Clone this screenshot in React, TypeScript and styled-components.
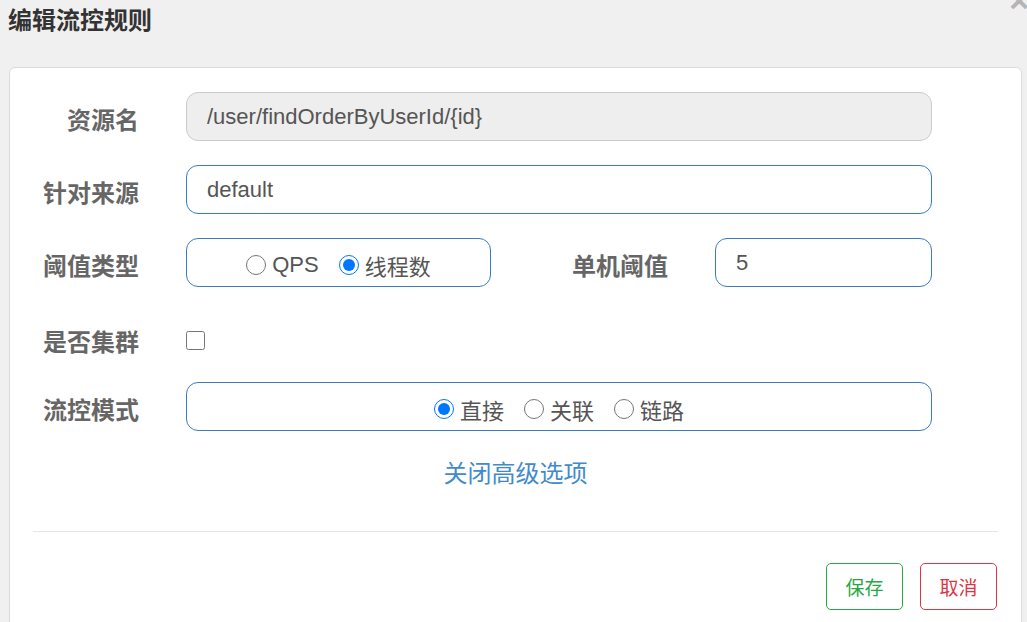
import React from 'react';
import styled, { createGlobalStyle } from 'styled-components';

const GlobalStyle = createGlobalStyle`
  html, body {
    margin: 0;
    padding: 0;
    background: #f0f0f0;
    overflow: hidden;
  }
  body {
    font-family: "Liberation Sans", "Noto Sans CJK SC", sans-serif;
  }
`;

const CJK = `"Noto Sans CJK SC", "Liberation Sans", sans-serif`;
const LATIN = `"Liberation Sans", "Noto Sans CJK SC", sans-serif`;

// modal frame
const Page = styled.div`
  position: relative;
  width: 1027px;
  height: 622px;
  overflow: hidden;
`;

const Header = styled.div`
  height: 67px;
  box-sizing: border-box;
  padding: 1px 0 0 8px;
`;

const Title = styled.h4`
  margin: 0;
  font-family: ${CJK};
  font-size: 24px;
  font-weight: 700;
  color: #333;
  line-height: 36px;
`;

const Close = styled.span`
  position: absolute;
  top: -17px;
  right: -2px;
  font-family: ${LATIN};
  font-size: 34px;
  font-weight: 700;
  color: #b5b5b5;
  line-height: 34px;
`;

const Card = styled.div`
  margin-left: 9px;
  width: 1013px;
  box-sizing: border-box;
  background: #fff;
  border: 1px solid #dcdcdc;
  border-radius: 6px;
  padding: 24px 0 60px;
`;

const Form = styled.div`
  display: flex;
  flex-direction: column;
  gap: 24px;
  padding-right: 89px;
`;

const Row = styled.div<{ $plain?: boolean }>`
  display: flex;
  align-items: center;
  height: ${p => (p.$plain ? '47px' : '49px')};
  box-sizing: border-box;
  padding-top: ${p => (p.$plain ? '11px' : '0')};
`;

const Label = styled.label<{ $grow?: boolean; $plain?: boolean }>`
  flex: ${p => (p.$grow ? '1' : '0 0 129px')};
  text-align: right;
  margin-right: 47px;
  padding-top: ${p => (p.$plain ? '0' : '4px')};
  font-family: ${CJK};
  font-size: 24px;
  font-weight: 700;
  color: #666;
`;

const TextInput = styled.input<{ $width?: number }>`
  box-sizing: border-box;
  height: 49px;
  ${p => (p.$width ? `width: ${p.$width}px;` : 'flex: 1;')}
  padding: 0 20px;
  border: 1px solid #3a7cbf;
  border-radius: 12px;
  background: #fff;
  font-family: ${LATIN};
  font-size: 22px;
  color: #555;
  outline: none;

  &:disabled {
    background: #eee;
    border-color: #ccc;
    color: #555;
  }
`;

const RadioBox = styled.div<{ $width?: number }>`
  box-sizing: border-box;
  height: 49px;
  ${p => (p.$width ? `width: ${p.$width}px;` : 'flex: 1;')}
  display: flex;
  align-items: center;
  justify-content: center;
  gap: 20px;
  border: 1px solid #3a7cbf;
  border-radius: 12px;
  padding-top: 5px;
`;

const Option = styled.label`
  display: flex;
  align-items: center;
  gap: 6px;
  font-family: ${LATIN};
  font-size: 22px;
  color: #555;
`;

const Radio = styled.input.attrs({ type: 'radio' })`
  width: 20px;
  height: 20px;
  margin: 0;
`;

const Check = styled.input.attrs({ type: 'checkbox' })`
  width: 19px;
  height: 19px;
  margin: 0;
`;

const LinkRow = styled.div`
  text-align: center;
  margin-top: 24px;
`;

const Link = styled.a`
  font-family: ${CJK};
  font-size: 24px;
  line-height: 34px;
  color: #428bca;
  text-decoration: none;
  cursor: pointer;
`;

const Divider = styled.hr`
  margin: 42px 23px 0;
  border: 0;
  border-top: 1px solid #e5e5e5;
`;

const Footer = styled.div`
  display: flex;
  justify-content: flex-end;
  gap: 17px;
  padding: 31px 24px 0 0;
`;

const Button = styled.button<{ $color: string }>`
  width: 77px;
  height: 47px;
  background: #fff;
  border: 1px solid ${p => p.$color};
  border-radius: 5px;
  color: ${p => p.$color};
  font-family: ${CJK};
  font-size: 19px;
  cursor: pointer;
`;

export default function App() {
  return (
    <Page>
      <GlobalStyle />
      <Header>
        <Title>编辑流控规则</Title>
      </Header>
      <Close>×</Close>
      <Card>
        <Form>
          <Row>
            <Label>资源名</Label>
            <TextInput disabled value="/user/findOrderByUserId/{id}" readOnly />
          </Row>
          <Row>
            <Label>针对来源</Label>
            <TextInput defaultValue="default" />
          </Row>
          <Row>
            <Label>阈值类型</Label>
            <RadioBox $width={305}>
              <Option>
                <Radio name="grade" />
                QPS
              </Option>
              <Option>
                <Radio name="grade" defaultChecked />
                线程数
              </Option>
            </RadioBox>
            <Label $grow>单机阈值</Label>
            <TextInput $width={217} defaultValue="5" />
          </Row>
          <Row $plain>
            <Label $plain>是否集群</Label>
            <Check />
          </Row>
          <Row>
            <Label>流控模式</Label>
            <RadioBox>
              <Option>
                <Radio name="mode" defaultChecked />
                直接
              </Option>
              <Option>
                <Radio name="mode" />
                关联
              </Option>
              <Option>
                <Radio name="mode" />
                链路
              </Option>
            </RadioBox>
          </Row>
        </Form>
        <LinkRow>
          <Link>关闭高级选项</Link>
        </LinkRow>
        <Divider />
        <Footer>
          <Button $color="#28a745">保存</Button>
          <Button $color="#dc3545">取消</Button>
        </Footer>
      </Card>
    </Page>
  );
}
